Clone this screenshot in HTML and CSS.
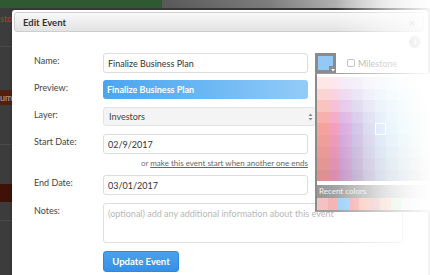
FILE: index.html
```html
<!DOCTYPE html>
<html>
<head>
<meta charset="utf-8">
<link rel="stylesheet" href="styles.css">
</head>
<body>
<div class="backdrop">
  <div class="topbar"><div class="topbar-green"></div><div class="topbar-gray"></div></div>
  <div class="bg-row bg-r1"><span class="bg-red">sto</span></div>
  <div class="bg-row bg-r2"></div>
  <div class="bg-band">um</div>
  <div class="bg-row bg-r3"></div>
  <div class="bg-row bg-r4"></div>
  <div class="bg-band bg-band-dark"></div>
  <div class="bg-row bg-r5"></div>
</div>

<div class="modal">
  <div class="modal-header">
    <span class="modal-title">Edit Event</span>
    <span class="modal-close">&times;</span>
  </div>
  <div class="modal-body">
    <span class="info-icon">i</span>
    <div class="row row-name">
      <div class="label">Name:</div>
      <div class="field input">Finalize Business Plan</div>
      <div class="swatch-wrap">
        <div class="swatch">
          <span class="swatch-corner">
            <svg width="6" height="6" viewBox="0 0 6 6"><path d="M1 2 L5 2 L3 4.5 Z" fill="#fff"/></svg>
          </span>
        </div>
        <div class="palette">
          <div class="palette-grid"></div>
          <div class="recent-label">Recent colors</div>
          <div class="recent-grid"></div>
        </div>
      </div>
      <label class="milestone"><span class="checkbox"></span><span class="milestone-text">Milestone</span></label>
    </div>
    <div class="row row-preview">
      <div class="label">Preview:</div>
      <div class="field preview">Finalize Business Plan</div>
    </div>
    <div class="row row-layer">
      <div class="label">Layer:</div>
      <div class="field select">
        <span>Investors</span>
        <svg class="select-arrows" width="5" height="8" viewBox="0 0 5 8"><path d="M0.5 3 L2.5 0.5 L4.5 3 Z M0.5 5 L2.5 7.5 L4.5 5 Z" fill="#8a8a8a"/></svg>
      </div>
    </div>
    <div class="row row-start">
      <div class="label">Start Date:</div>
      <div class="field input">02/9/2017</div>
    </div>
    <div class="help">or <a class="help-link">make this event start when another one ends</a></div>
    <div class="row row-end">
      <div class="label">End Date:</div>
      <div class="field input">03/01/2017</div>
    </div>
    <div class="row row-notes">
      <div class="label">Notes:</div>
      <div class="field notes">(optional) add any additional information about this event</div>
    </div>
    <div class="row row-button">
      <div class="label"></div>
      <button class="btn-primary">Update Event</button>
    </div>
  </div>
</div>

<div class="fade"></div>
<script src="script.js"></script>
</body>
</html>
```

FILE: styles.css
```css
html, body {
  margin: 0;
  padding: 0;
}
body {
  width: 430px;
  height: 275px;
  overflow: hidden;
  position: relative;
  background: #3c3c3c;
  font-family: Lato, "Liberation Sans", sans-serif;
  font-size: 9px;
  color: #444;
}

/* ---------- backdrop app ---------- */
.topbar {
  display: flex;
  height: 8px;
}
.topbar-green {
  width: 162px;
  background: #2f5a31;
}
.topbar-gray {
  flex: 1;
  background: linear-gradient(to right, #585858, #7d7d7d 40%, #d8d8d8 85%, #f2f2f2);
}
.bg-row {
  border-bottom: 1px solid #4a4a4a;
}
.bg-r1 { height: 38px; }
.bg-r2 { height: 43px; border-bottom: none; }
.bg-r3 { height: 39px; }
.bg-r4 { height: 39px; border-bottom: none; }
.bg-r5 { height: 18px; }
.bg-red {
  display: block;
  padding-top: 5px;
  color: #c0392b;
  font-size: 9px;
  line-height: 12px;
}
.bg-band {
  height: 15px;
  background: #52200f;
  color: #b9b0ac;
  font-size: 9px;
  line-height: 15px;
}
.bg-band-dark {
  height: 18px;
  background: #3f1208;
}

/* ---------- modal ---------- */
.modal {
  position: absolute;
  left: 12px;
  top: 10px;
  width: 416px;
  height: 268px;
  box-sizing: border-box;
  padding: 2px;
  background: #fff;
  border-radius: 3px 3px 0 0;
  box-shadow: 0 0 3px rgba(0, 0, 0, 0.35);
}
.modal-header {
  height: 20px;
  box-sizing: border-box;
  border: 1px solid #cdcdcd;
  border-radius: 3px;
  background: linear-gradient(#f8f8f8, #e3e3e3);
  display: flex;
  align-items: center;
  justify-content: space-between;
  padding: 0 8px;
  margin-right: 2px;
}
.modal-title {
  font-weight: bold;
  font-size: 9.5px;
  color: #333;
}
.modal-close {
  font-size: 11px;
  color: #999;
  line-height: 1;
}
.modal-body {
  position: relative;
  padding: 21px 0 0 20px;
}
.info-icon {
  position: absolute;
  left: 395px;
  top: 4px;
  width: 12px;
  height: 12px;
  border-radius: 50%;
  background: #bdbdbd;
  color: #fff;
  font-weight: bold;
  font-size: 8px;
  line-height: 12px;
  text-align: center;
  font-family: "Liberation Serif", serif;
}

/* ---------- form ---------- */
.row {
  display: flex;
  align-items: flex-start;
}
.label {
  width: 69px;
  flex: none;
  padding-top: 2px;
  line-height: 12px;
  font-size: 9px;
  color: #444;
}
.field {
  box-sizing: border-box;
  display: flex;
  align-items: center;
  font-size: 9px;
  color: #333;
  flex: none;
}
.input {
  width: 205px;
  height: 20px;
  border: 1px solid #dddddd;
  border-radius: 3px;
  padding: 0 4px;
  background: #fff;
}
.row-preview { margin-top: 7px; }
.preview {
  width: 205px;
  height: 19px;
  border-radius: 3px;
  padding: 0 4px;
  background: linear-gradient(to right, #4aa5ef, #6bb7f4 50%, #93ccf8);
  color: #fff;
  font-weight: bold;
}
.row-layer { margin-top: 8px; }
.select {
  width: 213px;
  height: 19px;
  border: 1px solid #e3e3e3;
  border-radius: 3px;
  background: #f4f4f4;
  padding: 0 2px 0 5px;
  justify-content: space-between;
  color: #444;
}
.select-arrows {
  display: block;
}
.row-start { margin-top: 8px; }
.help {
  margin: 4px 0 0 69px;
  width: 205px;
  text-align: right;
  font-size: 8px;
  line-height: 10px;
  color: #777;
}
.help-link {
  color: #666;
  text-decoration: underline;
}
.row-end { margin-top: 7px; }
.row-notes { margin-top: 8px; }
.notes {
  width: 300px;
  height: 40px;
  border: 1px solid #dedede;
  border-radius: 3px;
  padding: 4px 4px;
  align-items: flex-start;
  line-height: 12px;
  color: #b8b8b8;
}
.row-button { margin-top: 8px; }
.btn-primary {
  width: 76px;
  height: 21px;
  box-sizing: border-box;
  border: 1px solid #2f88de;
  border-radius: 3px;
  background: linear-gradient(#4aa2ee, #3590e6);
  color: #fff;
  font-family: inherit;
  font-weight: bold;
  font-size: 9.5px;
  padding: 0;
}

/* ---------- colour picker ---------- */
.swatch-wrap {
  position: relative;
  margin-left: 7px;
  flex: none;
}
.swatch {
  position: relative;
  width: 21px;
  height: 20px;
  box-sizing: border-box;
  border: 3px solid #8b8b8b;
  background: #92c9f7;
}
.swatch-corner {
  position: absolute;
  right: -3px;
  bottom: -3px;
  width: 7px;
  height: 7px;
  background: #8b8b8b;
  display: flex;
  align-items: center;
  justify-content: center;
}
.swatch-corner svg { display: block; }
.palette {
  position: absolute;
  left: 0;
  top: 20px;
  width: 130px;
  border-left: 2px solid #8b8b8b;
  border-top: 1px solid #9a9a9a;
  border-bottom: 2px solid #a0a0a0;
  background: #fff;
  padding-top: 3px;
  z-index: 2;
}
.palette-grid {
  display: grid;
  grid-template-columns: repeat(10, 11.5px);
  grid-auto-rows: 11.6px;
}
.cell {
  box-sizing: border-box;
}
.cell-selected {
  border: 1.5px solid #fff;
}
.recent-label {
  margin-top: 4px;
  height: 13px;
  line-height: 13px;
  padding-left: 2px;
  font-size: 8px;
  color: #f2f2f2;
  background: linear-gradient(to right, #989898, #b4b4b4 40%, #eeeeee 85%, #fff);
}
.recent-grid {
  display: grid;
  grid-template-columns: repeat(12, 10.5px);
  height: 12px;
}

.milestone {
  display: flex;
  align-items: center;
  height: 20px;
  margin-left: 11px;
}
.checkbox {
  width: 8px;
  height: 8px;
  box-sizing: border-box;
  border: 1px solid #b5b5b5;
  border-radius: 2px;
  background: #fff;
}
.milestone-text {
  margin-left: 3px;
  font-size: 9px;
  color: #a0a0a0;
}

/* ---------- right fade ---------- */
.fade {
  position: absolute;
  left: 0;
  top: 0;
  width: 430px;
  height: 275px;
  pointer-events: none;
  z-index: 10;
  background: linear-gradient(to right, rgba(255,255,255,0) 0, rgba(255,255,255,0) 335px, rgba(255,255,255,0.55) 385px, rgba(255,255,255,0.9) 425px, rgba(255,255,255,0.95) 430px);
}
```

FILE: script.js
```js
(function () {
  var bases = ['#f6a29c', '#f19ebf', '#d7a6de', '#c6b6e2', '#c9c9ea', '#c6ddf6', '#cbe8f8', '#d3f0f8', '#dcf4ee', '#e6f6e6'];
  var white = [255, 255, 255];
  var dark = [120, 80, 100];
  function rgb(h) {
    return [parseInt(h.slice(1, 3), 16), parseInt(h.slice(3, 5), 16), parseInt(h.slice(5, 7), 16)];
  }
  function mix(a, b, t) {
    return a.map(function (v, i) { return Math.round(v * (1 - t) + b[i] * t); });
  }
  var lighten = [0.75, 0.55, 0.35, 0.15];
  var grid = document.querySelector('.palette-grid');
  for (var r = 0; r < 9; r++) {
    for (var c = 0; c < bases.length; c++) {
      var base = rgb(bases[c]);
      var col;
      if (r < 4) col = mix(base, white, lighten[r]);
      else col = mix(base, dark, (r - 4) * 0.05);
      var d = document.createElement('div');
      d.className = 'cell' + (r === 4 && c === 5 ? ' cell-selected' : '');
      d.style.background = 'rgb(' + col.join(',') + ')';
      grid.appendChild(d);
    }
  }
  var recent = ['#f5c1c1', '#f5b5b5', '#9fd2fa', '#f6afb1', '#f8c7b7', '#efc3c5', '#f7d3c9', '#d7f4d7', '#eef0ee', '#f2f2f6', '#f6f6f6', '#fafafa'];
  var rg = document.querySelector('.recent-grid');
  recent.forEach(function (h) {
    var d = document.createElement('div');
    d.style.background = h;
    rg.appendChild(d);
  });
})();
```
